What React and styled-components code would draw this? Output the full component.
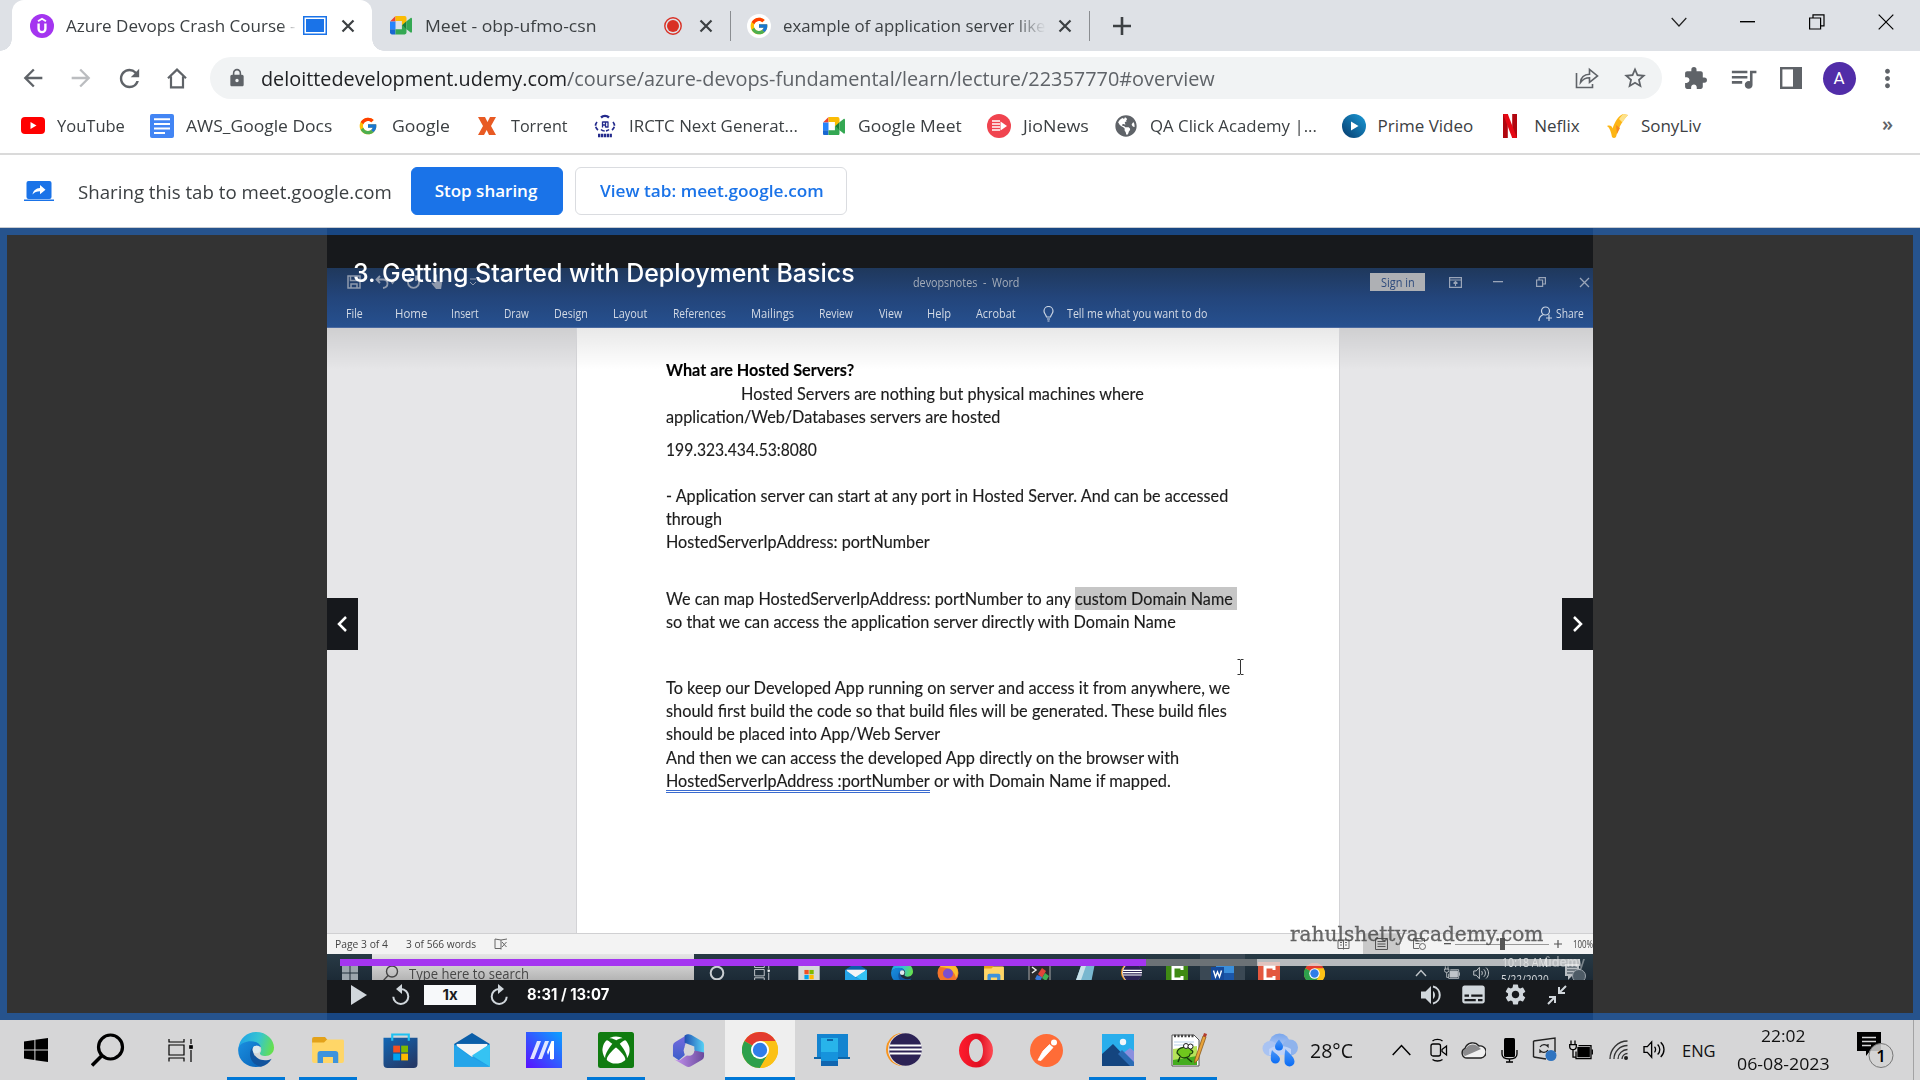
import React, { useLayoutEffect, useRef, useState } from "react";
import styled, { createGlobalStyle, css } from "styled-components";
import { FcGoogle } from "react-icons/fc";
import { FaXbox, FaGlobeAmericas } from "react-icons/fa";
import {
  MdExtension,
  MdQueueMusic,
  MdLock,
  MdStarBorder,
  MdRefresh,
  MdArrowBack,
  MdArrowForward,
  MdMoreVert,
  MdSettings,
  MdSubtitles,
} from "react-icons/md";

const ui = '"Open Sans", "Noto Sans", sans-serif';
const word = 'Lato, "Open Sans", sans-serif';
const player = 'Inter, "Liberation Sans", sans-serif';

const GlobalStyle = createGlobalStyle`
  * { box-sizing: border-box; }
  html, body { margin: 0; padding: 0; background: #fff; overflow: hidden; }
  body { font-family: ${ui}; }
  svg { display: block; flex: none; }
`;

/* ---------- text that keeps a fixed advance width ---------- */

const FitBox = styled.span`
  display: block;
  flex: none;
  width: ${(p) => p.$w}px;
  margin-left: ${(p) => p.$ml || 0}px;
  white-space: pre;
  font-family: ${(p) => p.$font || "inherit"};
  font-size: ${(p) => (p.$size ? p.$size + "px" : "inherit")};
  font-weight: ${(p) => p.$weight || "inherit"};
  color: ${(p) => p.$color || "inherit"};
`;
const FitInner = styled.span`
  display: inline-block;
  transform-origin: 0 50%;
`;

function Fit({ w, ml, size, weight, color, font, children }) {
  const ref = useRef(null);
  const [scale, setScale] = useState(1);
  useLayoutEffect(() => {
    const natural = ref.current.offsetWidth;
    if (natural) setScale(w / natural);
  }, [w, children]);
  return (
    <FitBox $w={w} $ml={ml} $size={size} $weight={weight} $color={color} $font={font}>
      <FitInner ref={ref} style={{ transform: `scaleX(${scale})` }}>
        {children}
      </FitInner>
    </FitBox>
  );
}

/* ---------- shared parts ---------- */

const Screen = styled.div`
  width: 1920px;
  height: 1080px;
  display: flex;
  flex-direction: column;
  overflow: hidden;
`;
const Slot = styled.div`
  flex: none;
  width: ${(p) => p.$w}px;
  height: 100%;
  margin-left: ${(p) => (p.$ml === "auto" ? "auto" : (p.$ml || 0) + "px")};
  display: flex;
  align-items: center;
  justify-content: center;
  color: ${(p) => p.$color || "inherit"};
  background: ${(p) => p.$bg || "none"};
`;

/* ---------- tab strip ---------- */

const TabStrip = styled.header`
  flex: none;
  height: 51px;
  padding-left: 12px;
  background: #dee1e6;
  display: flex;
  color: #3c4043;
  font-size: 17px;
`;
const Tab = styled.div`
  position: relative;
  flex: none;
  width: ${(p) => p.$w}px;
  height: 51px;
  padding-left: ${(p) => p.$pl}px;
  display: flex;
  align-items: center;
  ${(p) =>
    p.$active &&
    css`
      background: #fff;
      border-radius: 12px 12px 0 0;
      &::before,
      &::after {
        content: "";
        position: absolute;
        bottom: 0;
        width: 12px;
        height: 12px;
      }
      &::before {
        left: -12px;
        background: radial-gradient(circle at 0 0, transparent 11.5px, #fff 12px);
      }
      &::after {
        right: -12px;
        background: radial-gradient(circle at 100% 0, transparent 11.5px, #fff 12px);
      }
    `}
`;
const TabTitle = styled.div`
  flex: none;
  width: ${(p) => p.$w}px;
  margin-left: ${(p) => p.$ml}px;
  overflow: hidden;
  ${(p) => p.$fade && css`mask-image: linear-gradient(90deg, #000 calc(100% - ${p.$fade}px), transparent);`}
`;
const TabDivider = styled.i`
  flex: none;
  width: 1.5px;
  height: 30px;
  margin-left: auto;
  background: #8a8d91;
`;
const TabIcon = styled.div`
  flex: none;
  margin-left: ${(p) => (p.$ml === "auto" ? "auto" : (p.$ml || 0) + "px")};
  ${(p) => p.$round && css`border-radius: 50%; background: #fff; padding: 2px;`}
`;
const WindowButtons = styled.div`
  margin-left: auto;
  height: 43px;
  display: flex;
`;

const CloseX = () => (
  <svg width="14" height="14" viewBox="0 0 14 14" stroke="#3c4043" strokeWidth="2.2">
    <path d="M1.5 1.5l11 11M12.5 1.5l-11 11" />
  </svg>
);
const UdemyIcon = () => (
  <svg width="24" height="24" viewBox="0 0 24 24">
    <circle cx="12" cy="12" r="12" fill="#a435f0" />
    <path d="M8 7.3l4-2.5 4 2.5" fill="none" stroke="#fff" strokeWidth="1.9" />
    <path d="M8.6 9.5v5.2a3.4 3.4 0 0 0 6.8 0V9.5" fill="none" stroke="#fff" strokeWidth="2.4" />
  </svg>
);
const MeetIcon = ({ s = 22 }) => (
  <svg width={s} height={s * 0.84} viewBox="0 0 24 20">
    <path fill="#ea4335" d="M0 6L6 0v6z" />
    <path fill="#fbbc04" d="M6 0h10a2 2 0 0 1 2 2v5l-5 3V5.5H6z" />
    <path fill="#2684fc" d="M0 6h6v8.5H0z" />
    <path fill="#1967d2" d="M0 14.5h6V20H2a2 2 0 0 1-2-2z" />
    <path fill="#34a853" d="M6 14.5h7V10l5 3.5V18a2 2 0 0 1-2 2H6z" />
    <path fill="#188038" d="M13 10l5-4.3v8.8z" />
    <path fill="#34a853" d="M18 5.7l4.5-3.6c.7-.5 1.5-.1 1.5.7v14.4c0 .8-.8 1.2-1.5.7L18 14.4z" />
  </svg>
);

function Tabs() {
  return (
    <TabStrip>
      <Tab $active $w={360} $pl={18}>
        <UdemyIcon />
        <TabTitle $w={231} $ml={12} $fade={16}>
          <Fit w={229}>Azure Devops Crash Course -</Fit>
        </TabTitle>
        <TabIcon $ml={6}>
          <svg width="24" height="19" viewBox="0 0 24 19">
            <rect x=".75" y=".75" width="22.5" height="17.5" fill="#fff" stroke="#1a73e8" strokeWidth="1.5" />
            <rect x="3" y="3" width="18" height="13" fill="#1a73e8" />
          </svg>
        </TabIcon>
        <TabIcon $ml={14}>
          <CloseX />
        </TabIcon>
      </Tab>
      <Tab $w={359} $pl={18}>
        <MeetIcon />
        <TabTitle $w={172} $ml={13}>
          <Fit w={172}>Meet - obp-ufmo-csn</Fit>
        </TabTitle>
        <TabIcon $ml={67}>
          <svg width="18" height="18" viewBox="0 0 18 18">
            <circle cx="9" cy="9" r="8.2" fill="none" stroke="#d93025" strokeWidth="1.4" />
            <circle cx="9" cy="9" r="6" fill="#d93025" />
          </svg>
        </TabIcon>
        <TabIcon $ml={17}>
          <CloseX />
        </TabIcon>
        <TabDivider />
      </Tab>
      <Tab $w={359} $pl={16}>
        <TabIcon $round>
          <FcGoogle size={20} />
        </TabIcon>
        <TabTitle $w={263} $ml={12} $fade={34}>
          <Fit w={263}>example of application server like</Fit>
        </TabTitle>
        <TabIcon $ml={12}>
          <CloseX />
        </TabIcon>
        <TabDivider />
      </Tab>
      <Slot $w={18} $ml={23}>
        <svg width="18" height="18" stroke="#3c4043" strokeWidth="2.6">
          <path d="M9 0v18M0 9h18" />
        </svg>
      </Slot>
      <WindowButtons>
        <Slot $w={69}>
          <svg width="16" height="10" fill="none" stroke="#222" strokeWidth="1.2">
            <path d="M.7 1l7.3 8 7.3-8" />
          </svg>
        </Slot>
        <Slot $w={69}>
          <svg width="15" height="2" fill="#000">
            <path d="M0 0h15v1.4H0z" />
          </svg>
        </Slot>
        <Slot $w={69}>
          <svg width="16" height="16" fill="none" stroke="#000" strokeWidth="1.2">
            <path d="M.6 4h11v11H.6zM4 4V.9h11v11h-3.2" />
          </svg>
        </Slot>
        <Slot $w={69}>
          <svg width="16" height="16" stroke="#000" strokeWidth="1.2">
            <path d="M.7.7l14.6 14.6M15.3.7L.7 15.3" />
          </svg>
        </Slot>
      </WindowButtons>
    </TabStrip>
  );
}

/* ---------- toolbar ---------- */

const Toolbar = styled.nav`
  flex: none;
  height: 54px;
  padding-left: 9px;
  display: flex;
  align-items: center;
  color: #5f6368;
`;
const Omnibox = styled.div`
  flex: none;
  width: 1452px;
  height: 42px;
  margin: 0 9px;
  padding: 0 3px 0 17px;
  border-radius: 21px;
  background: #f1f3f4;
  display: flex;
  align-items: center;
  font-size: 20px;
`;
const Avatar = styled.div`
  width: 33px;
  height: 33px;
  border-radius: 50%;
  background: #512da8;
  color: #fff;
  font: 400 17px/33px Roboto, sans-serif;
  text-align: center;
`;

function AddressBar() {
  return (
    <Toolbar>
      <Slot $w={48}><MdArrowBack size={28} /></Slot>
      <Slot $w={48} $color="#bbbdc0"><MdArrowForward size={28} /></Slot>
      <Slot $w={48}><MdRefresh size={29} /></Slot>
      <Slot $w={48}>
        <svg width="20" height="21" fill="none" stroke="#5f6368" strokeWidth="2.2">
          <path d="M1 10.2L10 1.6l9 8.6M4 8.4v11h12v-11" />
        </svg>
      </Slot>
      <Omnibox>
        <MdLock size={20} />
        <Fit w={306} ml={14} color="#202124">deloittedevelopment.udemy.com</Fit>
        <Fit w={648}>/course/azure-devops-fundamental/learn/lecture/22357770#overview</Fit>
        <Slot $w={48} $ml="auto">
          <svg width="24" height="22" viewBox="0 0 24 22" fill="none" stroke="#5f6368" strokeWidth="1.6">
            <path d="M1.5 6v14.5h16V17" />
            <path d="M5.5 15.5c.4-5 3.6-8 9-8.2V2.5L22.5 9l-8 6.3v-4.6c-4 0-6.600 1.400-9 4.800z" />
          </svg>
        </Slot>
        <Slot $w={48}><MdStarBorder size={26} /></Slot>
      </Omnibox>
      <Slot $w={48}><MdExtension size={25} /></Slot>
      <Slot $w={48}><MdQueueMusic size={31} /></Slot>
      <Slot $w={48}>
        <svg width="22" height="22">
          <rect x="1.200" y="1.200" width="19.6" height="19.6" fill="none" stroke="#5f6368" strokeWidth="2.400" />
          <rect x="13" y="1" width="8" height="20" fill="#5f6368" />
        </svg>
      </Slot>
      <Slot $w={48}><Avatar>A</Avatar></Slot>
      <Slot $w={48}><MdMoreVert size={29} /></Slot>
    </Toolbar>
  );
}

/* ---------- bookmarks ---------- */

const BookmarkBar = styled.nav`
  flex: none;
  height: 50px;
  padding: 0 27px 6px 21px;
  border-bottom: 2px solid #dadada;
  display: flex;
  align-items: center;
  gap: 24.7px;
  color: #3c4043;
  font-size: 17px;
`;
const Bookmark = styled.div`
  display: flex;
  align-items: center;
  gap: 12px;
`;
const BookmarkName = styled.div`
  padding-bottom: 2px;
`;
const Favicon = styled.div`
  width: 24px;
  height: 24px;
  display: flex;
  align-items: center;
  justify-content: center;
`;
const More = styled.span`
  margin-left: auto;
  font-size: 20px;
  font-weight: 600;
  color: #5f6368;
  line-height: 20px;
  padding-bottom: 5px;
`;

const bookmarks = [
  ["YouTube", 68, <svg width="24" height="18"><rect width="24" height="17" rx="4" fill="#f00" /><path d="M9.500 5v7l6-3.500z" fill="#fff" /></svg>],
  ["AWS_Google Docs", 146, <svg width="24" height="24"><rect width="24" height="24" rx="2" fill="#4285f4" /><path d="M4 5.200h16M4 10h16M4 14.400h16M4 19h11" stroke="#fff" strokeWidth="2" /></svg>],
  ["Google", 58, <FcGoogle size={20} />],
  ["Torrent", 57, <svg width="18" height="18"><path d="M0 0h7l2.500 5L12 0h6l-5 9 5 9h-7l-2.300-5L6 18H0l5-9z" fill="#e85a23" /></svg>],
  ["IRCTC Next Generat...", 169, <svg width="24" height="24" viewBox="0 0 24 24" fill="none" stroke="#232a8c"><path d="M8 3.500a6 6 0 0 1 8 0" strokeWidth="2.400" /><path d="M4 8c-2.500 3-1.500 6 1 8M20 8c2.500 3 1.500 6-1 8M8 15.500c2 2 6 2 8 0" strokeWidth="1.700" strokeDasharray="4 1.200" /><path d="M9.500 7.500v6M12.500 7.500v6M15 7.500v6M9.500 8h5.500M9.500 11h3M12.500 13h3" strokeWidth="1.300" /><path d="M5 21.500h14" strokeWidth="3.500" strokeDasharray="2.300 .6" /></svg>],
  ["Google Meet", 104, <MeetIcon />],
  ["JioNews", 66, <svg width="24" height="24"><circle cx="12" cy="12" r="12" fill="#f0444f" /><path d="M5 7h8M5 10h8M5 13h8M5 16h8" stroke="#fff" strokeWidth="1.700" /><path d="M13.500 7.500v9l6.500-4.500z" fill="#fff" /></svg>],
  ["QA Click Academy |...", 167, <FaGlobeAmericas size={22} color="#5f6368" />],
  ["Prime Video", 96, <svg width="24" height="24"><defs><linearGradient id="pv" x1="1" x2="0" y1="0" y2="1"><stop offset="0" stopColor="#1b9bd8" /><stop offset="1" stopColor="#063a6b" /></linearGradient></defs><circle cx="12" cy="12" r="12" fill="url(#pv)" /><path d="M9 7.500v9l7.500-4.500z" fill="#fff" /></svg>],
  ["Neflix", 46, <svg width="14" height="24"><path d="M0 0h4.800v24H0zM9.200 0H14v24H9.200z" fill="#b1060f" /><path d="M0 0h4.800L14 24H9.200z" fill="#e50914" /></svg>],
  ["SonyLiv", 60, <svg width="24" height="24"><path d="M2 12c3-1 5 0 5.500 2.500C10 8 13 2 18 0l5 1C17 7 13 15 11 23c-1.500 1.500-3 1-4 0C6 18 5 14 2 12z" fill="#fdb515" /><path d="M18 0l5 1c-2 2-4 5-5.500 7.500L14 5z" fill="#fde28a" /><path d="M11 11l4 3-3 6z" fill="#f58a1f" /></svg>],
];

function Bookmarks() {
  return (
    <BookmarkBar>
      {bookmarks.map(([name, w, icon]) => (
        <Bookmark key={name}>
          <Favicon>{icon}</Favicon>
          <BookmarkName><Fit w={w}>{name}</Fit></BookmarkName>
        </Bookmark>
      ))}
      <More>»</More>
    </BookmarkBar>
  );
}

/* ---------- sharing bar ---------- */

const ShareBar = styled.section`
  flex: none;
  height: 73px;
  padding: 0 24px;
  border-bottom: 1px solid #c9ccd1;
  display: flex;
  align-items: center;
  color: #3c4043;
  font-size: 18.500px;
`;
const ShareButton = styled.button`
  flex: none;
  width: ${(p) => p.$w}px;
  height: 48px;
  margin: 0 0 0 ${(p) => p.$ml}px;
  padding: 0 2px 2px 0;
  border-radius: 6px;
  border: 1px solid ${(p) => (p.$primary ? "#1a73e8" : "#dadce0")};
  background: ${(p) => (p.$primary ? "#1a73e8" : "#fff")};
  color: ${(p) => (p.$primary ? "#fff" : "#1a73e8")};
  font: 600 17px ${ui};
  display: flex;
  align-items: center;
  justify-content: center;
`;

function SharingNotice() {
  return (
    <ShareBar>
      <svg width="30" height="20" viewBox="0 0 30 20">
        <path d="M0 18.500h30V20H0z" fill="#1a73e8" />
        <rect x="2.500" width="25" height="18" rx="2" fill="#1a73e8" />
        <path d="M8.500 13.500c.7-4 3.400-6.300 7.500-6.600V4l5.500 4.700-5.500 4.600v-3c-3.300 0-5.500.900-7.500 3.200z" fill="#fff" />
      </svg>
      <Fit w={314} ml={24}>Sharing this tab to meet.google.com</Fit>
      <ShareButton $primary $w={152} $ml={19}>
        <Fit w={103}>Stop sharing</Fit>
      </ShareButton>
      <ShareButton $w={272} $ml={12}>
        <Fit w={224}>View tab: meet.google.com</Fit>
      </ShareButton>
    </ShareBar>
  );
}

/* ---------- player ---------- */

const Stage = styled.main`
  position: relative;
  flex: none;
  height: 792px;
  background: #333;
  display: flex;
  justify-content: center;
`;
const CaptureFrame = styled.div`
  position: absolute;
  inset: 0;
  border: 7px solid rgba(26, 115, 232, 0.5);
`;
const Video = styled.section`
  position: relative;
  width: 1266px;
  height: 792px;
  overflow: hidden;
  background: #17191c;
  display: flex;
  flex-direction: column;
  font-family: ${ui};
`;
const LetterBox = styled.div`
  flex: none;
  height: 40px;
`;
const Ribbon = styled.div`
  flex: none;
  height: 60px;
  background: linear-gradient(#1f385c, #23457b 50%, #26508f);
  border-bottom: 1px solid #4a69a0;
`;
const RibbonRow = styled.div`
  height: ${(p) => p.$h}px;
  display: flex;
  align-items: center;
  color: ${(p) => p.$color};
  font-size: 12.500px;
  font-weight: 500;
  padding-right: ${(p) => p.$pr || 0}px;
`;
const SignIn = styled.div`
  flex: none;
  width: 55px;
  height: 18px;
  margin-left: 351px;
  background: #aeb0b4;
  color: #2d4a7c;
  display: flex;
  align-items: center;
  justify-content: center;
`;
const Canvas = styled.div`
  flex: none;
  height: 605px;
  padding-left: 249px;
  background: linear-gradient(rgba(0, 0, 0, 0.1), transparent 42px), #e6e6e8;
`;
const Paper = styled.article`
  width: 764px;
  height: 605px;
  padding: 30px 0 0 89px;
  border: solid #d3d3d6;
  border-width: 0 1px;
  background: linear-gradient(rgba(0, 0, 0, 0.09), transparent 42px), #fff;
  color: #1c1c1c;
  font: 17.600px/23px ${word};
  -webkit-text-stroke: 0.15px;
`;
const Line = styled.div`
  height: 23px;
  margin-top: ${(p) => p.$mt || 0}px;
  padding-left: ${(p) => p.$indent || 0}px;
  display: flex;
`;
const Selection = styled.div`
  width: 162px;
  background: #c6c6c6;
`;
const GrammarMark = styled.div`
  height: 24px;
  border-bottom: 3px double #3a6bd0;
`;
const StatusBar = styled.div`
  flex: none;
  height: 21px;
  border-top: 1px solid #d0d0d2;
  background: #f3f3f3;
  display: flex;
  align-items: center;
  color: #444;
  font-size: 11.500px;
  line-height: 15px;
`;
const StatusText = styled.div`
  display: flex;
  padding-bottom: 2px;
`;
const ZoomTrack = styled.div`
  width: 94px;
  height: 1px;
  margin: 0 4px;
  background: #999;
  display: flex;
  align-items: center;
  justify-content: center;
`;
const ZoomThumb = styled.i`
  width: 5px;
  height: 12px;
  flex: none;
  background: #555;
`;
const InnerTaskbar = styled.div`
  flex: none;
  height: 26px;
  overflow: hidden;
  background: linear-gradient(#283a45, #1c2a36);
  display: flex;
`;
const InnerIcons = styled.div`
  height: 38px;
  display: flex;
`;
const InnerSearch = styled.div`
  flex: none;
  width: 322px;
  height: 38px;
  background: linear-gradient(#e6e6e6, #b4b4b4 26px);
  display: flex;
  align-items: center;
  color: #474747;
  font-size: 15px;
`;
const InnerClock = styled.div`
  margin-left: 7px;
  width: 52px;
  color: #d5d9dc;
  font-size: 12px;
  line-height: 17px;
`;
const Controls = styled.div`
  flex: none;
  height: 40px;
  padding: 0 15px 11px 21px;
  display: flex;
  align-items: center;
  color: #d1d7dc;
`;
const Rate = styled.div`
  width: 52px;
  height: 20px;
  background: #f7f9fa;
  color: #1c1d1f;
  display: flex;
  align-items: center;
  justify-content: center;
  font: 700 15px ${player};
`;
const LectureTitle = styled.h1`
  position: absolute;
  left: 26px;
  top: 28px;
  margin: 0;
  color: #fff;
  font: 500 25px/34px ${player};
`;
const Watermark = styled.div`
  position: absolute;
  left: 963px;
  top: 692px;
  color: rgba(70, 70, 70, 0.8);
  font: 21px/28px "DejaVu Serif", serif;
  -webkit-text-stroke: 0.3px;
`;
const Brand = styled.div`
  position: absolute;
  left: 1217px;
  top: 725px;
  color: rgba(255, 255, 255, 0.4);
  font: 600 14px/18px ${player};
`;
const StepButton = styled.button`
  position: absolute;
  top: 370px;
  ${(p) => p.$side}: 0;
  width: 31px;
  height: 52px;
  padding: 0 1px 0 0;
  border: 0;
  background: #16181c;
  display: flex;
  align-items: center;
  justify-content: center;
`;
const Progress = styled.div`
  position: absolute;
  left: 13px;
  right: 13px;
  top: 731px;
  height: 7px;
  background: rgba(225, 225, 225, 0.78);
  display: flex;
`;
const ProgressPart = styled.i`
  width: ${(p) => p.$w}px;
  background: ${(p) => p.$color};
`;
const TextCursor = styled.div`
  position: absolute;
  left: 910px;
  top: 431px;
`;

const menuItems = [
  ["File", 19, 17], ["Home", 32, 32], ["Insert", 24, 28], ["Draw", 25, 25], ["Design", 25, 34],
  ["Layout", 25, 34], ["References", 26, 53], ["Mailings", 25, 43], ["Review", 25, 34],
  ["View", 26, 23], ["Help", 25, 24], ["Acrobat", 25, 40],
];

function WordRibbon() {
  return (
    <Ribbon>
      <RibbonRow $h={28} $color="#a5adba">
        <Slot $w={20} $ml={17}>
          <svg width="14" height="14" fill="none" stroke="#8f9aad" strokeWidth="1.500"><path d="M1 1h12v12H1zM3.500 1v4.500h7V1M4 13V9h6v4" /></svg>
        </Slot>
        <Slot $w={24} $ml={9}>
          <svg width="20" height="14" fill="none" stroke="#8f9aad" strokeWidth="1.800"><path d="M5 1L1.500 4.500 5 8M2 4.500h6c6 0 6 8 0 8.500M16 6l1.500 2L19 6" /></svg>
        </Slot>
        <Slot $w={20} $ml={7}>
          <svg width="14" height="15" fill="none" stroke="#8f9aad" strokeWidth="1.800"><path d="M9 2.500a5.500 5.500 0 1 1-5 0M9 6V1.500h4" /></svg>
        </Slot>
        <Slot $w={18} $ml={4}>
          <svg width="12" height="16" fill="#8f9aad"><path d="M3.500 1.500a1.300 1.300 0 0 1 2.600 0V7l5 1.300-1 6.700H5L.5 9.500l1-1 2 1z" /></svg>
        </Slot>
        <Slot $w={10} $ml={22}>
          <svg width="8" height="8" fill="none" stroke="#8f9aad"><path d="M1 1h6M1 4l3 3 3-3" /></svg>
        </Slot>
        <Fit w={106} ml={435}>devopsnotes  -  Word</Fit>
        <SignIn><Fit w={34}>Sign in</Fit></SignIn>
        <Slot $w={14} $ml={23}>
          <svg width="13" height="11" fill="none" stroke="#9aa5b8" strokeWidth="1.200"><path d="M.6.6h11.800v9.800H.6zM.6 3h11.800M6.500 9V4.500M4.500 6.500l2-2 2 2" /></svg>
        </Slot>
        <Slot $w={14} $ml={29}>
          <svg width="10" height="2" fill="#9aa5b8"><path d="M0 0h10v1.300H0z" /></svg>
        </Slot>
        <Slot $w={14} $ml={29}>
          <svg width="10" height="10" fill="none" stroke="#9aa5b8" strokeWidth="1.200"><path d="M.6 3h6v6.400h-6zM3 3V.7h6.400V7H7" /></svg>
        </Slot>
        <Slot $w={14} $ml={29}>
          <svg width="11" height="11" stroke="#9aa5b8" strokeWidth="1.300"><path d="M1 1l9 9M10 1l-9 9" /></svg>
        </Slot>
      </RibbonRow>
      <RibbonRow $h={35} $color="#d3dae5" $pr={9}>
        {menuItems.map(([label, ml, w]) => (
          <Fit key={label} w={w} ml={ml}>{label}</Fit>
        ))}
        <Slot $w={14} $ml={25}>
          <svg width="11" height="16" fill="none" stroke="#c9d3e2" strokeWidth="1.200"><path d="M3.500 11C3 8.500 1 7.500 1 5a4.500 4.500 0 0 1 9 0c0 2.500-2 3.500-2.500 6zM4 13h3M4.500 15h2" /></svg>
        </Slot>
        <Fit w={140} ml={12}>Tell me what you want to do</Fit>
        <Slot $w={16} $ml="auto">
          <svg width="15" height="15" fill="none" stroke="#c9d3e2" strokeWidth="1.200"><circle cx="7.500" cy="5" r="4" /><path d="M1 15c0-3 1.500-5.500 4.500-6.500M11 8.500V15M8 12h6" /></svg>
        </Slot>
        <Fit w={28} ml={3}>Share</Fit>
      </RibbonRow>
    </Ribbon>
  );
}

function Document() {
  return (
    <Canvas>
      <Paper>
        <Line><Fit w={188} weight={700} color="#000">What are Hosted Servers?</Fit></Line>
        <Line $mt={1} $indent={75}><Fit w={403}>Hosted Servers are nothing but physical machines where</Fit></Line>
        <Line><Fit w={334}>application/Web/Databases servers are hosted</Fit></Line>
        <Line $mt={10}><Fit w={151}>199.323.434.53:8080</Fit></Line>
        <Line $mt={23}><Fit w={562}>- Application server can start at any port in Hosted Server. And can be accessed</Fit></Line>
        <Line><Fit w={56}>through</Fit></Line>
        <Line><Fit w={264}>HostedServerIpAddress: portNumber</Fit></Line>
        <Line $mt={34}>
          <Fit w={409}>{"We can map HostedServerIpAddress: portNumber to any "}</Fit>
          <Selection><Fit w={158}>custom Domain Name</Fit></Selection>
        </Line>
        <Line><Fit w={510}>so that we can access the application server directly with Domain Name</Fit></Line>
        <Line $mt={43}><Fit w={564}>To keep our Developed App running on server and access it from anywhere, we</Fit></Line>
        <Line><Fit w={561}>should first build the code so that build files will be generated. These build files</Fit></Line>
        <Line><Fit w={274}>should be placed into App/Web Server</Fit></Line>
        <Line $mt={1}><Fit w={513}>And then we can access the developed App directly on the browser with</Fit></Line>
        <Line>
          <GrammarMark><Fit w={264}>HostedServerIpAddress :portNumber</Fit></GrammarMark>
          <Fit w={237} ml={4}>or with Domain Name if mapped.</Fit>
        </Line>
      </Paper>
    </Canvas>
  );
}

const EdgeIcon = ({ s = 36, id = "edge" }) => (
  <svg width={s} height={s} viewBox="0 0 36 36">
    <defs>
      <linearGradient id={id + "a"} x1="0" x2="1" y1=".3" y2=".5"><stop offset="0" stopColor="#1fa3e8" /><stop offset=".55" stopColor="#36c5d0" /><stop offset="1" stopColor="#66e04e" /></linearGradient>
      <linearGradient id={id + "b"} x1="0" x2="1" y1="0" y2="1"><stop offset="0" stopColor="#1a8fe0" /><stop offset="1" stopColor="#0a63b8" /></linearGradient>
    </defs>
    <path d="M.5 16C1.500 6.500 9 0 18 0c11 0 18 8 18 15.500C36 21 32 24 27.500 24c-4 0-5.500-1.500-5.500-2.600 0-1 1.200-1.500 1.200-4C23 13 19 10 13.500 10 7 10 2 13 .5 16z" fill={`url(#${id}a)`} />
    <path d="M.3 16C2 11.500 7.500 9.300 13 9.300c5 0 9 2.500 10 6-2-2-5-2.300-7-.3-3.500 3.500-2.500 10 3 14.500 2.500 2 5 3 5 4.500C14 38-1.500 31 .3 16z" fill={`url(#${id}b)`} />
    <path d="M14.500 15.500C10 20 11 32 23 34.700c5-1.200 8.500-4.300 10.600-8-4 2-9.600 2.300-13.800-.4-4.300-2.800-6-7-3.300-11.300z" fill="#12549e" />
    <circle cx="18.300" cy="17.500" r="3.800" fill="#dfe9ee" />
  </svg>
);
const ChromeIcon = ({ s = 36 }) => (
  <svg width={s} height={s} viewBox="0 0 36 36">
    <circle cx="18" cy="18" r="18" fill="#fbc116" />
    <path d="M18 18L2.400 9A18 18 0 0 1 33.600 9z" fill="#e33b2e" />
    <path d="M2.400 9A18 18 0 0 0 18 36l7.800-13.500L18 18z" fill="#2da04c" />
    <path d="M18 9h15.600A18 18 0 0 1 18 36l7.800-13.500z" fill="#fbc116" />
    <circle cx="18" cy="18" r="9" fill="#fff" />
    <circle cx="18" cy="18" r="7.200" fill="#2f7de9" />
  </svg>
);
const StoreIcon = ({ s = 36, plain }) => (
  <svg width={s} height={s} viewBox="0 0 36 36">
    <defs><linearGradient id="store" x1="0" x2=".7" y1="0" y2="1"><stop offset="0" stopColor="#1267b5" /><stop offset="1" stopColor="#243a68" /></linearGradient></defs>
    <path d="M.5 5h35v27a4 4 0 0 1-4 4h-27a4 4 0 0 1-4-4z" fill={plain ? "#d5d9dc" : "url(#store)"} />
    <path d="M9.500 8V1.500h17V8" fill="none" stroke={plain ? "#ddd" : "#1fc1f2"} strokeWidth="2.200" />
    <path d="M10.500 13h7v7h-7z" fill="#f25022" /><path d="M18.700 13h7v7h-7z" fill="#7fba00" />
    <path d="M10.500 21.200h7v7h-7z" fill="#00a4ef" /><path d="M18.700 21.200h7v7h-7z" fill="#ffb900" />
  </svg>
);
const MailIcon = ({ s = 36 }) => (
  <svg width={s} height={s * 0.94} viewBox="0 0 36 34">
    <path d="M0 11L18 0l18 11v4H0z" fill="#0b5ea8" />
    <path d="M2.500 11h31v12h-31z" fill="#f5f5f6" />
    <path d="M0 11l18 13L36 11v23H0z" fill="#1f9fe6" />
    <path d="M18 22.500L36 11v23z" fill="#35c3f3" />
    <path d="M0 34V12l15 11 21 11z" fill="#25a5e9" />
  </svg>
);
const FolderIcon = ({ s = 32 }) => (
  <svg width={s} height={s * 0.84} viewBox="0 0 32 27">
    <path d="M0 2a2 2 0 0 1 2-2h11l2.500 3H30v6H0z" fill="#e3a21a" />
    <path d="M0 5.500h12L15 2.500h15.500A1.500 1.500 0 0 1 32 4v20a2 2 0 0 1-2 2H2a2 2 0 0 1-2-2z" fill="#ffd667" />
    <path d="M5.500 27V17a3 3 0 0 1 3-3h14.800a3 3 0 0 1 3 3v10h-5.300v-7H11v7z" fill="#3d93dc" />
  </svg>
);
const EclipseIcon = ({ s = 36 }) => (
  <svg width={s} height={s * 0.92} viewBox="0 0 36 33">
    <circle cx="16.500" cy="16.500" r="16.500" fill="#f7941e" />
    <circle cx="18.500" cy="16.500" r="16.500" fill="#e6e6ea" />
    <circle cx="19.500" cy="16.500" r="16.300" fill="#2c2255" />
    <path d="M3.600 12.500h32M3.200 16.500h32.800M3.600 20.500h32" stroke="#fff" strokeWidth="1.900" />
  </svg>
);
const Camtasia = ({ color }) => (
  <svg width="22" height="22"><rect width="22" height="22" fill={color} /><path d="M16 8V5H7v12h9v-3" fill="none" stroke="#fff" strokeWidth="3" /></svg>
);
const BatteryIcon = ({ s = 24, color = "#000" }) => (
  <svg width={s} height={s * 0.84} viewBox="0 0 24 20" fill="none" stroke={color} strokeWidth="1.300">
    <path d="M2 .5V5M6 .5V5M.7 4.500h6.600v2.300A3 3 0 0 1 4 9.500 3 3 0 0 1 .7 6.800zM4 9.500V17h3" />
    <path d="M9.500 5.500H22v13H7v-7" /><path d="M9 7.500h11.200v9H9z" fill={color} /><path d="M23.300 9.500v5" />
  </svg>
);
const SoundIcon = ({ s = 23, color = "#000" }) => (
  <svg width={s} height={s * 0.83} viewBox="0 0 24 20" fill="none" stroke={color} strokeWidth="1.400">
    <path d="M1 7h3.500l4.500-5v16l-4.500-5H1zM12 7c1.500 1.500 1.500 4.500 0 6M15.300 4.700c3 2.800 3 7.800 0 10.600M18.500 2.300c4.600 4.200 4.600 11.200 0 15.400" />
  </svg>
);
const TaskViewIcon = ({ s = 25, color = "#000" }) => (
  <svg width={s} height={s} viewBox="0 0 25 25" fill="none" stroke={color} strokeWidth="1.200">
    <path d="M1 1v3h15V1M1 7h15v10H1zM1 23.500V20h15v3.500M23 1v5M23 12v12" /><rect x="21.800" y="7.800" width="2.400" height="2.400" fill={color} />
  </svg>
);

function RecordedTaskbar() {
  return (
    <InnerTaskbar>
      <InnerIcons>
        <Slot $w={45}>
          <svg width="16" height="16" fill="#9aa5ad"><path d="M0 0h7.500v7.500H0zM8.500 0H16v7.500H8.500zM0 8.500h7.500V16H0zM8.500 8.500H16V16H8.500z" /></svg>
        </Slot>
        <InnerSearch>
          <Slot $w={36}>
            <svg width="17" height="17" fill="none" stroke="#444" strokeWidth="1.400"><circle cx="10" cy="6.500" r="5.500" /><path d="M6 10.500L1 16" /></svg>
          </Slot>
          <Fit w={120} ml={1}>Type here to search</Fit>
        </InnerSearch>
        <Slot $w={46}><svg width="16" height="16"><circle cx="8" cy="8" r="6.300" fill="none" stroke="#c9ced2" strokeWidth="2" /></svg></Slot>
        <Slot $w={44}><TaskViewIcon s={16} color="#eef1f3" /></Slot>
        <Slot $w={49}><StoreIcon s={22} plain /></Slot>
        <Slot $w={46}><MailIcon s={22} /></Slot>
        <Slot $w={46}><EdgeIcon s={22} id="edge2" /></Slot>
        <Slot $w={45}>
          <svg width="22" height="22"><circle cx="11" cy="11" r="10.500" fill="#f2742b" /><path d="M3 5C7 0 16 0 19 5c3 4 2 8 0 11-1-7-8-11-16-11z" fill="#fbbf2d" /><circle cx="11" cy="11.500" r="5" fill="#7b4fd0" /></svg>
        </Slot>
        <Slot $w={47}><FolderIcon s={20} /></Slot>
        <Slot $w={45}>
          <svg width="23" height="22"><path d="M1 1h21v18H1z" fill="#2a2a2e" stroke="#aaa" /><path d="M4 5l4 3-4 3" stroke="#eee" fill="none" strokeWidth="1.500" /><path d="M14 6l4 3-4 7-4-4z" fill="#e0453a" /><path d="M17 11l4 3-3 5-4-3z" fill="#3fae52" /><path d="M9 13l5 2-2 5-5-3z" fill="#3977d8" /></svg>
        </Slot>
        <Slot $w={46}>
          <svg width="22" height="22"><path d="M8 1h13l-4 20H1z" fill="#78b7cf" /><path d="M8 1h5L6 21H1z" fill="#c8e2ea" /></svg>
        </Slot>
        <Slot $w={46}><EclipseIcon s={21} /></Slot>
        <Slot $w={46}><Camtasia color="#3f8a14" /></Slot>
        <Slot $w={45} $bg="#3a4854">
          <svg width="23" height="22"><path d="M5 1h18v20H5z" fill="#3a8fdc" /><path d="M5 11h18v10H5z" fill="#1b56a8" /><rect y="5" width="13" height="13" fill="#164a9b" /><path d="M2.500 8.500L4.500 15l2-5 2 5 2-6.500" stroke="#fff" fill="none" strokeWidth="1.400" /></svg>
        </Slot>
        <Slot $w={47}><Camtasia color="#e3583f" /></Slot>
        <Slot $w={44}><ChromeIcon s={21} /></Slot>
        <Slot $w={20} $ml={75}><svg width="12" height="8" fill="none" stroke="#c0c5c9" strokeWidth="1.400"><path d="M1 7l5-5.500L11 7" /></svg></Slot>
        <Slot $w={20} $ml={11}><BatteryIcon s={16} color="#c0c5c9" /></Slot>
        <Slot $w={20} $ml={9}><SoundIcon s={17} color="#c0c5c9" /></Slot>
        <InnerClock>
          <Fit w={46} ml={4}>10:18 AM</Fit>
          <Fit w={48} ml={3}>5/22/2020</Fit>
        </InnerClock>
        <Slot $w={24} $ml={13}>
          <svg width="24" height="22"><path d="M2 2h14v12H9l-4 4v-4H2z" fill="#b9bec3" /><path d="M4 5h10M4 8h10M4 11h7" stroke="#2a3a46" /><circle cx="16" cy="14" r="6.500" fill="#4d5b66" stroke="#9aa3aa" /></svg>
        </Slot>
      </InnerIcons>
    </InnerTaskbar>
  );
}

const RotateIcon = ({ flip }) => (
  <svg width="18" height="22" viewBox="0 0 18 22" transform={flip ? "scale(-1 1)" : undefined}>
    <path d="M9 5a7.500 7.500 0 1 1-7.700 7.700" fill="none" stroke="#d1d7dc" strokeWidth="2" />
    <path d="M10 0v10L4 5z" fill="#d1d7dc" />
  </svg>
);

function Player() {
  return (
    <Stage>
      <Video>
        <LetterBox />
        <WordRibbon />
        <Document />
        <StatusBar>
          <StatusText>
            <Fit w={53} ml={8}>Page 3 of 4</Fit>
            <Fit w={70} ml={18}>3 of 566 words</Fit>
          </StatusText>
          <Slot $w={16} $ml={17}>
            <svg width="14" height="12" fill="none" stroke="#666"><path d="M7 2v9.500M7 2L1 1v9.500h6M7 2l6-1M8 4l4.500 5M12.500 4L8 9" /></svg>
          </Slot>
          <Slot $w={16} $ml="auto">
            <svg width="13" height="11" fill="none" stroke="#666"><path d="M6.500 1v9.500M1 1h11v8.500H1zM3 3.500h2M3 6h2M8 3.500h2M8 6h2" /></svg>
          </Slot>
          <Slot $w={37} $ml={12} $bg="#c9c9c9">
            <svg width="13" height="12" fill="none" stroke="#555"><path d="M.5.5h12v11H.5zM2.500 3.500h8M2.500 6h8M2.500 8.500h8" /></svg>
          </Slot>
          <Slot $w={16} $ml={11}>
            <svg width="13" height="12" fill="none" stroke="#666"><path d="M6 10.500H.5V.5h11V4M2.500 3h7M2.500 5.500h4" /><circle cx="9.500" cy="8.500" r="3" /></svg>
          </Slot>
          <Slot $w={8} $ml={16}><svg width="7" height="2" fill="#555"><path d="M0 0h7v1.300H0z" /></svg></Slot>
          <ZoomTrack><ZoomThumb /></ZoomTrack>
          <Slot $w={10}><svg width="8" height="8" stroke="#555" strokeWidth="1.200"><path d="M4 0v8M0 4h8" /></svg></Slot>
          <StatusText><Fit w={20} ml={10}>100%</Fit></StatusText>
        </StatusBar>
        <RecordedTaskbar />
        <Controls>
          <svg width="20" height="20" fill="#d1d7dc"><path d="M3 0v20l16-10z" /></svg>
          <Slot $w={20} $ml={23}><RotateIcon /></Slot>
          <Slot $w={52} $ml={13}><Rate><Fit w={15}>1x</Fit></Rate></Slot>
          <Slot $w={20} $ml={13}><RotateIcon flip /></Slot>
          <Fit w={82} ml={18} size={15.5} weight={700} color="#fff" font={player}>8:31 / 13:07</Fit>
          <Slot $w={42} $ml="auto">
            <svg width="20" height="20" viewBox="0 0 20 20">
              <path d="M0 6.500h4.500L10 1v18l-5.500-5.500H0z" fill="#d1d7dc" />
              <path d="M12 6c2.600 1.600 2.600 6.400 0 8z" fill="#d1d7dc" />
              <path d="M12 1.500c9 2 9 15 0 17" fill="none" stroke="#d1d7dc" strokeWidth="2" />
            </svg>
          </Slot>
          <Slot $w={42}><MdSubtitles size={27} /></Slot>
          <Slot $w={42}><MdSettings size={25} /></Slot>
          <Slot $w={42}>
            <svg width="20" height="20" fill="none" stroke="#d1d7dc" strokeWidth="2"><path d="M19 1l-6 6M12 2v6h6M1 19l6-6M2 12h6v6" /></svg>
          </Slot>
        </Controls>
        <LectureTitle><Fit w={502}>3. Getting Started with Deployment Basics</Fit></LectureTitle>
        <StepButton $side="left">
          <svg width="12" height="18" fill="none" stroke="#fff" strokeWidth="2.500"><path d="M10 2L3 9l7 7" /></svg>
        </StepButton>
        <StepButton $side="right">
          <svg width="12" height="18" fill="none" stroke="#fff" strokeWidth="2.500"><path d="M3 2l7 7-7 7" /></svg>
        </StepButton>
        <TextCursor>
          <svg width="7" height="16" fill="none" stroke="#333"><path d="M.5.500h2.500l.5.500.5-.5h2.500M3.500 1v14M.5 15.500H3l.5-.5.5.5h2.500" /></svg>
        </TextCursor>
        <Watermark><Fit w={253}>rahulshettyacademy.com</Fit></Watermark>
        <Progress>
          <ProgressPart $w={806} $color="#a435f0" />
          <ProgressPart $w={111} $color="#6c7276" />
        </Progress>
        <Brand><Fit w={41}>ûdemy</Fit></Brand>
      </Video>
      <CaptureFrame />
    </Stage>
  );
}

/* ---------- desktop taskbar ---------- */

const Taskbar = styled.footer`
  flex: none;
  height: 60px;
  background: #d6d6d7;
  display: flex;
  color: #111;
`;
const AppSlot = styled.div`
  flex: none;
  width: ${(p) => p.$w || 72}px;
  height: 60px;
  margin-left: ${(p) => p.$ml || 0}px;
  padding-top: 3px;
  display: flex;
  flex-direction: column;
  align-items: center;
  border: solid transparent;
  border-width: 0 ${(p) => (p.$active ? 1 : 7)}px;
  background: ${(p) => (p.$active ? "#efefef" : "none")};
  background-clip: padding-box;
  &::after {
    content: "";
    flex: none;
    align-self: stretch;
    height: 3px;
    background: ${(p) => (p.$open ? "#0078d7" : "transparent")};
  }
`;
const AppIcon = styled.div`
  flex: 1;
  display: flex;
  align-items: center;
`;
const DateBlock = styled.div`
  width: 94px;
  margin-left: 20px;
  display: flex;
  flex-direction: column;
  align-items: center;
  font-size: 17px;
  line-height: 28px;
  padding-top: 2px;
`;
const TrayText = styled.div`
  display: flex;
  align-items: center;
  font-size: ${(p) => p.$size}px;
`;
const ShowDesktop = styled.i`
  width: 1.500px;
  margin-left: auto;
  margin-right: 6px;
  background: #a3a3a4;
`;

const MAIcon = () => (
  <svg width="36" height="36"><defs><linearGradient id="ma" x1="1" x2="0" y1="0" y2="1"><stop offset="0" stopColor="#0aa2ff" /><stop offset="1" stopColor="#5a10ff" /></linearGradient></defs><rect width="36" height="36" fill="url(#ma)" /><path d="M4 27l7-18h4L8 27zM12 27l7-18h4l-7 18z" fill="#fff" opacity=".85" /><path d="M21 20l4.500-11H28v18h-4v-9l-2 5z" fill="#fff" /><circle cx="26" cy="26" r="1.600" fill="#fff" /></svg>
);
const XboxIcon = () => (
  <svg width="36" height="36" viewBox="0 0 36 36"><rect width="36" height="36" rx="2.500" fill="#107c10" /><g transform="translate(4 4)"><FaXbox size={28} color="#fff" /></g></svg>
);
const M365Icon = () => (
  <svg width="33" height="35" viewBox="0 0 34 36">
    <defs><linearGradient id="m1" x1="0" x2="0" y1="0" y2="1"><stop offset="0" stopColor="#7b6be0" /><stop offset="1" stopColor="#3b5fc9" /></linearGradient><linearGradient id="m2" x1="0" x2="1"><stop offset="0" stopColor="#1f4fb0" /><stop offset="1" stopColor="#57d1f5" /></linearGradient><linearGradient id="m3" x1="0" x2="1"><stop offset="0" stopColor="#c593f0" /><stop offset="1" stopColor="#6a4a9c" /></linearGradient></defs>
    <path d="M17 1L3 9.500A4 4 0 0 0 1 13v11l6 4 6-5v-9z" fill="url(#m1)" />
    <path d="M13 2.500C15 1 18 1 20 2l11 6.500a4 4 0 0 1 2 3.500v13l-10-7v-4L13 10z" fill="url(#m2)" />
    <path d="M33 20v4a4 4 0 0 1-2 3.500L20 34c-2 1.200-4 1.200-6 0L2 27c4 2 7 1 9-1l12-8z" fill="url(#m3)" />
    <circle cx="17.500" cy="18" r="5.500" fill="#d6d6d7" />
  </svg>
);
const PhoneIcon = () => (
  <svg width="36" height="32"><path d="M3 0h31v24H3z" fill="#1484d0" /><path d="M0 23h36v2H0z" fill="#0d65a8" /><path d="M7 4h17v28H7z" fill="#1166b0" /><path d="M7 4h17v23H7z" fill="#28b4ea" /><path d="M7 18h17v9H7z" fill="#1693dc" /><path d="M13 6h6" stroke="#0d65a8" strokeWidth="2" /></svg>
);
const OperaIcon = () => (
  <svg width="34" height="35"><defs><linearGradient id="op" x1="0" x2="1"><stop offset="0" stopColor="#ff1b2d" /><stop offset=".6" stopColor="#e01022" /><stop offset="1" stopColor="#ff4b54" /></linearGradient></defs><path fillRule="evenodd" d="M17 .5a17 17 0 1 0 0 34 17 17 0 0 0 0-34zm0 5.500c4 0 7 5 7 11.500S21 29 17 29s-7-5-7-11.500S13 6 17 6z" fill="url(#op)" /></svg>
);
const PostmanIcon = () => (
  <svg width="33" height="33"><circle cx="16.500" cy="16.500" r="16.500" fill="#ff6c37" /><circle cx="24" cy="8.500" r="3" fill="#fff" /><path d="M8 26l5-9 6.500-6.500 3.500 3L17 20l-6 6.500zM18 14l-4 7" fill="#fff" stroke="#fff" strokeWidth=".8" /></svg>
);
const PhotosIcon = () => (
  <svg width="32" height="32"><path d="M0 0h32v32H0z" fill="#29aeec" /><path d="M20 20L28 14l4 3v15z" fill="#8b8fdf" /><path d="M0 20L11 10l21 22H0z" fill="#14457f" /><path d="M16 20l4-4 12 12v4h-4z" fill="#2b6cb5" /><circle cx="21" cy="8" r="3.200" fill="#f3f6fa" /></svg>
);
const NotepadIcon = () => (
  <svg width="36" height="34"><path d="M1 2h22l5 5v26H1z" fill="#fff" stroke="#555" /><path d="M3 3h20" stroke="#444" strokeWidth="2.500" strokeDasharray="2 1.500" /><path d="M3 9h20M3 12h20" stroke="#b8d0e8" /><path d="M2 16l24-3v19H2z" fill="#b7e35a" /><path d="M2 27l24-4v9H2z" fill="#45ad1f" /><path d="M6 20c0-6 12-8 14-3 3 1 2 4-1 4 0 4-8 5-10 2z" fill="#6fc61d" stroke="#173b0a" strokeWidth="1.200" /><circle cx="15" cy="13" r="2.500" fill="#fff" stroke="#222" /><circle cx="19.500" cy="13.500" r="2.500" fill="#fff" stroke="#222" /><path d="M9 24l-2 5M16 25l5 4" stroke="#173b0a" strokeWidth="1.500" /><path d="M24 26l8-23 3 1-8 23-3.500 3z" fill="#e8a33a" stroke="#8a5a1a" strokeWidth=".8" /><path d="M32 3l1-3 3 1-1 3z" fill="#b33c2e" /></svg>
);
const WeatherIcon = () => (
  <svg width="36" height="36" viewBox="0 0 36 36">
    <defs>
      <linearGradient id="wx" x1="0" x2="0" y1="0" y2="1"><stop offset="0" stopColor="#7aa6ec" /><stop offset="1" stopColor="#c6d7f8" /></linearGradient>
      <linearGradient id="wd" x1="0" x2="0" y1="0" y2="1"><stop offset="0" stopColor="#4c97f7" /><stop offset="1" stopColor="#0b6df5" /></linearGradient>
    </defs>
    <circle cx="17.500" cy="12" r="10.500" fill="url(#wx)" />
    <circle cx="8" cy="16.500" r="7.500" fill="#a9c3f2" />
    <circle cx="28" cy="15.500" r="8" fill="#8fb3ec" />
    <path d="M7 17c6-4 16-4 22 0v6H7z" fill="#bfd2f6" />
    <g fill="url(#wd)">
      <path d="M17 7.500c1.500 2.500 4 4.500 4 7a4 4 0 0 1-8 0c0-2.500 2-4.500 4-7z" />
      <path d="M10 18c2 3 8 5.500 8 9a4.600 4.600 0 0 1-9.200 0c0-3 .2-6 1.200-9z" />
      <path d="M23.500 17c2 3 9 7.500 9 12.500a5 5 0 0 1-10 0c0-5 0-9 1-12.500z" />
    </g>
  </svg>
);

const apps = [
  [<EdgeIcon />, { $open: true, $ml: 4 }],
  [<FolderIcon />, { $open: true }],
  [<StoreIcon s={35} />, {}],
  [<MailIcon />, {}],
  [<MAIcon />, {}],
  [<XboxIcon />, { $open: true }],
  [<M365Icon />, {}],
  [<ChromeIcon />, { $open: true, $active: true }],
  [<PhoneIcon />, {}],
  [<EclipseIcon />, {}],
  [<OperaIcon />, { $w: 71 }],
  [<PostmanIcon />, { $w: 71 }],
  [<PhotosIcon />, { $open: true, $w: 71 }],
  [<NotepadIcon />, { $open: true, $w: 71 }],
];

function DesktopTaskbar() {
  return (
    <Taskbar>
      <Slot $w={72}>
        <svg width="24" height="24"><path d="M0 3.400L10.400 2v9.500H0zM11.400 1.800L24 0v11.500H11.400zM0 12.500h10.400V22L0 20.600zM11.400 12.500H24V24l-12.600-1.800z" /></svg>
      </Slot>
      <Slot $w={72}>
        <svg width="34" height="34" fill="none" stroke="#000"><circle cx="19.500" cy="14" r="12" strokeWidth="3.200" /><path d="M11 22.500L1 32.500" strokeWidth="3.600" /></svg>
      </Slot>
      <Slot $w={72}><TaskViewIcon /></Slot>
      {apps.map(([icon, props], i) => (
        <AppSlot key={i} {...props}>
          <AppIcon>{icon}</AppIcon>
        </AppSlot>
      ))}
      <Slot $w={36} $ml={38}><WeatherIcon /></Slot>
      <TrayText $size={20}><Fit w={43} ml={12}>28°C</Fit></TrayText>
      <Slot $w={36} $ml={30}><svg width="19" height="12" fill="none" stroke="#000" strokeWidth="1.500"><path d="M.7 11l8.800-9.500 8.800 9.500" /></svg></Slot>
      <Slot $w={36} $ml={2}>
        <svg width="18" height="24" fill="none" stroke="#000" strokeWidth="1.300"><rect x="1" y="6" width="9.500" height="12" rx="2" /><path d="M12 11.500l4.500-3.500v9L12 13.500zM2.500 3C5 .8 10 .8 12.500 3M2.500 21.500c2.500 2 7.500 2 10 0" /></svg>
      </Slot>
      <Slot $w={36} $ml={-2}>
        <svg width="25" height="18"><path d="M6 17A5 5 0 0 1 4 7.500 8 8 0 0 1 18 5a6 6 0 0 1 2 12z" fill="#f0f0f0" stroke="#222" strokeWidth="1.400" /><path d="M4.500 8A8 8 0 0 1 17 5.500l3 2.500-9 4-7 3c-3-2-2.500-6 .5-7z" fill="#8b8b8d" /></svg>
      </Slot>
      <Slot $w={36}>
        <svg width="17" height="26"><rect x="3" y="1" width="11" height="19" rx="1.500" /><path d="M1 13v4c0 4 3 5 7.500 5S16 21 16 17v-4M8.500 22v3M5 25h7" fill="none" stroke="#000" strokeWidth="1.300" /></svg>
      </Slot>
      <Slot $w={36}>
        <svg width="26" height="26"><path d="M1.500 4L23 1v14M14 22L1.500 20z" fill="none" stroke="#222" strokeWidth="1.400" /><path d="M1.500 4v16" stroke="#222" strokeWidth="1.400" /><path d="M8 10c2-3 6-3 8-.5V7M16 13c-2 3-6 3-8 .5V16" fill="none" stroke="#222" strokeWidth="1.300" /><circle cx="19" cy="18.500" r="5.500" fill="#2f74c0" /></svg>
      </Slot>
      <Slot $w={36}><BatteryIcon /></Slot>
      <Slot $w={36} $ml={1}>
        <svg width="19" height="20" fill="none" stroke="#333" strokeWidth="1.300"><path d="M1 19C1 9 9 1 18.500 1M5 19C5 11.500 11 5.500 18.500 5.500M9 19c0-5 4.500-9.500 9.500-9.500M13 19c0-3 2.500-5.500 5.500-5.500" /><circle cx="17" cy="18" r="1.400" fill="#000" /></svg>
      </Slot>
      <Slot $w={36}><SoundIcon /></Slot>
      <TrayText $size={16.5}><Fit w={34} ml={10}>ENG</Fit></TrayText>
      <DateBlock>
        <Fit w={44}>22:02</Fit>
        <Fit w={93}>06-08-2023</Fit>
      </DateBlock>
      <Slot $w={38} $ml={26}>
        <svg width="38" height="38" viewBox="0 0 38 38">
          <path d="M1 1h24v19H14l-4 5v-5H1z" />
          <path d="M6 6.500h14M6 10.500h14M6 14.500h9" stroke="#d6d6d7" strokeWidth="1.300" />
          <circle cx="25" cy="24.500" r="12" fill="#d3d3d4" fillOpacity=".85" stroke="#777" />
          <text x="25" y="31" textAnchor="middle" fontFamily="Open Sans" fontSize="17" fontWeight="600">1</text>
        </svg>
      </Slot>
      <ShowDesktop />
    </Taskbar>
  );
}

export default function App() {
  return (
    <>
      <GlobalStyle />
      <Screen>
        <Tabs />
        <AddressBar />
        <Bookmarks />
        <SharingNotice />
        <Player />
        <DesktopTaskbar />
      </Screen>
    </>
  );
}
